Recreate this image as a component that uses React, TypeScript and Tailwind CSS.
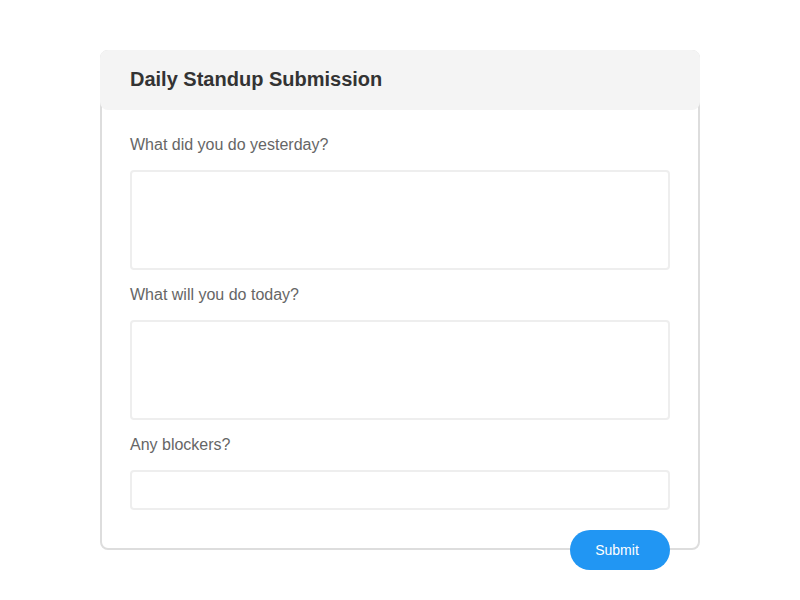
export default function App() {
  return (
    <div className="min-h-[600px] w-full bg-white pt-[50px] font-['Liberation_Sans',Arial,sans-serif]">
      <div className="mx-auto h-[500px] w-[600px] rounded-lg border-2 border-[#dddddd] bg-white">
        {/* Header */}
        <div className="-mx-[2px] -mt-[2px] h-[60px] rounded-lg bg-[#f4f4f4] px-[30px] pt-[14px]">
          <h2 className="text-[20px] font-bold text-[#333333]">Daily Standup Submission</h2>
        </div>

        {/* Form */}
        <div className="px-[28px] pt-[25px]">
          <label className="block text-[16px] leading-[20px] text-[#666666]">
            What did you do yesterday?
          </label>
          <textarea className="mt-[15px] block h-[100px] w-full resize-none rounded border-2 border-[#eeeeee] outline-none" />

          <label className="mt-[15px] block text-[16px] leading-[20px] text-[#666666]">
            What will you do today?
          </label>
          <textarea className="mt-[15px] block h-[100px] w-full resize-none rounded border-2 border-[#eeeeee] outline-none" />

          <label className="mt-[15px] block text-[16px] leading-[20px] text-[#666666]">
            Any blockers?
          </label>
          <input
            type="text"
            className="mt-[15px] block h-[40px] w-full rounded border-2 border-[#eeeeee] outline-none"
          />

          <div className="mt-[20px] flex justify-end">
            <button className="h-[40px] w-[100px] rounded-full bg-[#2196f3] pr-[6px] text-[14px] text-white">
              Submit
            </button>
          </div>
        </div>
      </div>
    </div>
  );
}
